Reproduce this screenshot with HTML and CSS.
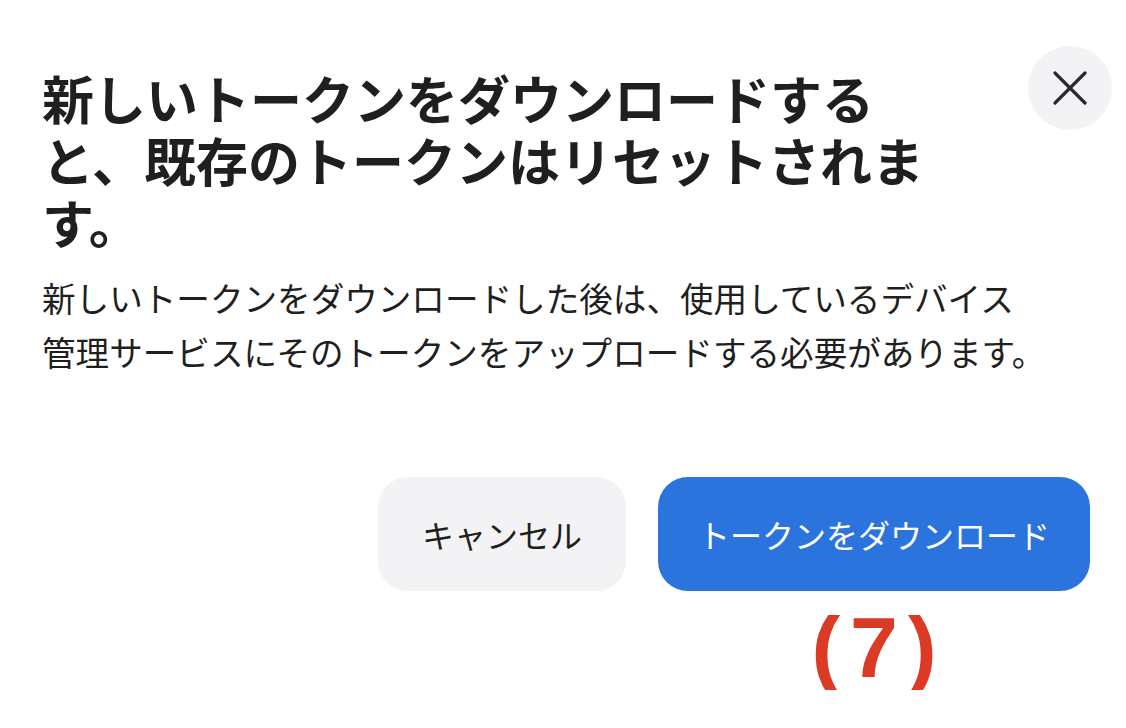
FILE: index.html
```html
<!DOCTYPE html>
<html lang="ja">
<head>
    <meta charset="UTF-8">
    <meta name="viewport" content="width=device-width, initial-scale=1.0">
    <title>トークンをダウンロード</title>
    <link rel="stylesheet" href="styles.css">
</head>
<body>
    <div class="dialog">
        <div class="dialog-header">
            <h1 class="dialog-title">新しいトークンをダウンロードすると、既存のトークンはリセットされます。</h1>
            <button class="close-btn" aria-label="閉じる">
                <svg width="34" height="34" viewBox="0 0 34 34">
                    <path d="M2 2 L32 32 M32 2 L2 32" stroke="#2b2b2d" stroke-width="3.2" stroke-linecap="round"/>
                </svg>
            </button>
        </div>

        <p class="dialog-body">新しいトークンをダウンロードした後は、使用しているデバイス<br>管理サービスにそのトークンをアップロードする必要があります。</p>

        <div class="actions">
            <button class="btn btn-secondary">キャンセル</button>
            <div class="primary-wrap">
                <button class="btn btn-primary">トークンをダウンロード</button>
                <span class="step-label">(7)</span>
            </div>
        </div>
    </div>
</body>
</html>
```

FILE: styles.css
```css
:root {
    --text: #1f1f21;
    --muted-bg: #f3f3f5;
    --primary: #2b74de;
    --annotation: #dc3a24;
}

* {
    margin: 0;
    padding: 0;
    box-sizing: border-box;
}

body {
    font-family: "Noto Sans CJK JP", "Noto Sans", sans-serif;
    background: #fff;
    color: var(--text);
}

.dialog {
    width: 1126px;
    padding: 46px 14px 0 42px;
}

.dialog-header {
    display: flex;
    align-items: flex-start;
    gap: 70px;
}

.dialog-title {
    flex: 1;
    margin-top: 21px;
    font-size: 52px;
    line-height: 62px;
    font-weight: 700;
}

.close-btn {
    flex: none;
    width: 84px;
    height: 84px;
    border: none;
    border-radius: 50%;
    background: var(--muted-bg);
    display: flex;
    align-items: center;
    justify-content: center;
    cursor: pointer;
}

.dialog-body {
    margin-top: 18px;
    font-size: 33.6px;
    line-height: 54px;
    font-weight: 400;
}

.actions {
    display: flex;
    justify-content: flex-end;
    align-items: flex-start;
    gap: 32px;
    margin-top: 98px;
    padding-right: 22px;
}

.btn {
    height: 114px;
    border: none;
    border-radius: 30px;
    font-family: inherit;
    font-size: 32px;
    cursor: pointer;
}

.btn-secondary {
    background: var(--muted-bg);
    color: var(--text);
    padding: 0 44px;
}

.btn-primary {
    background: var(--primary);
    color: #fff;
    padding: 0 40px;
}

.primary-wrap {
    display: flex;
    flex-direction: column;
    align-items: center;
}

.step-label {
    margin-top: 13px;
    font-family: "Liberation Sans", Arial, sans-serif;
    font-size: 86px;
    line-height: 1;
    font-weight: 700;
    letter-spacing: 10px;
    padding-left: 10px;
    color: var(--annotation);
}
```
